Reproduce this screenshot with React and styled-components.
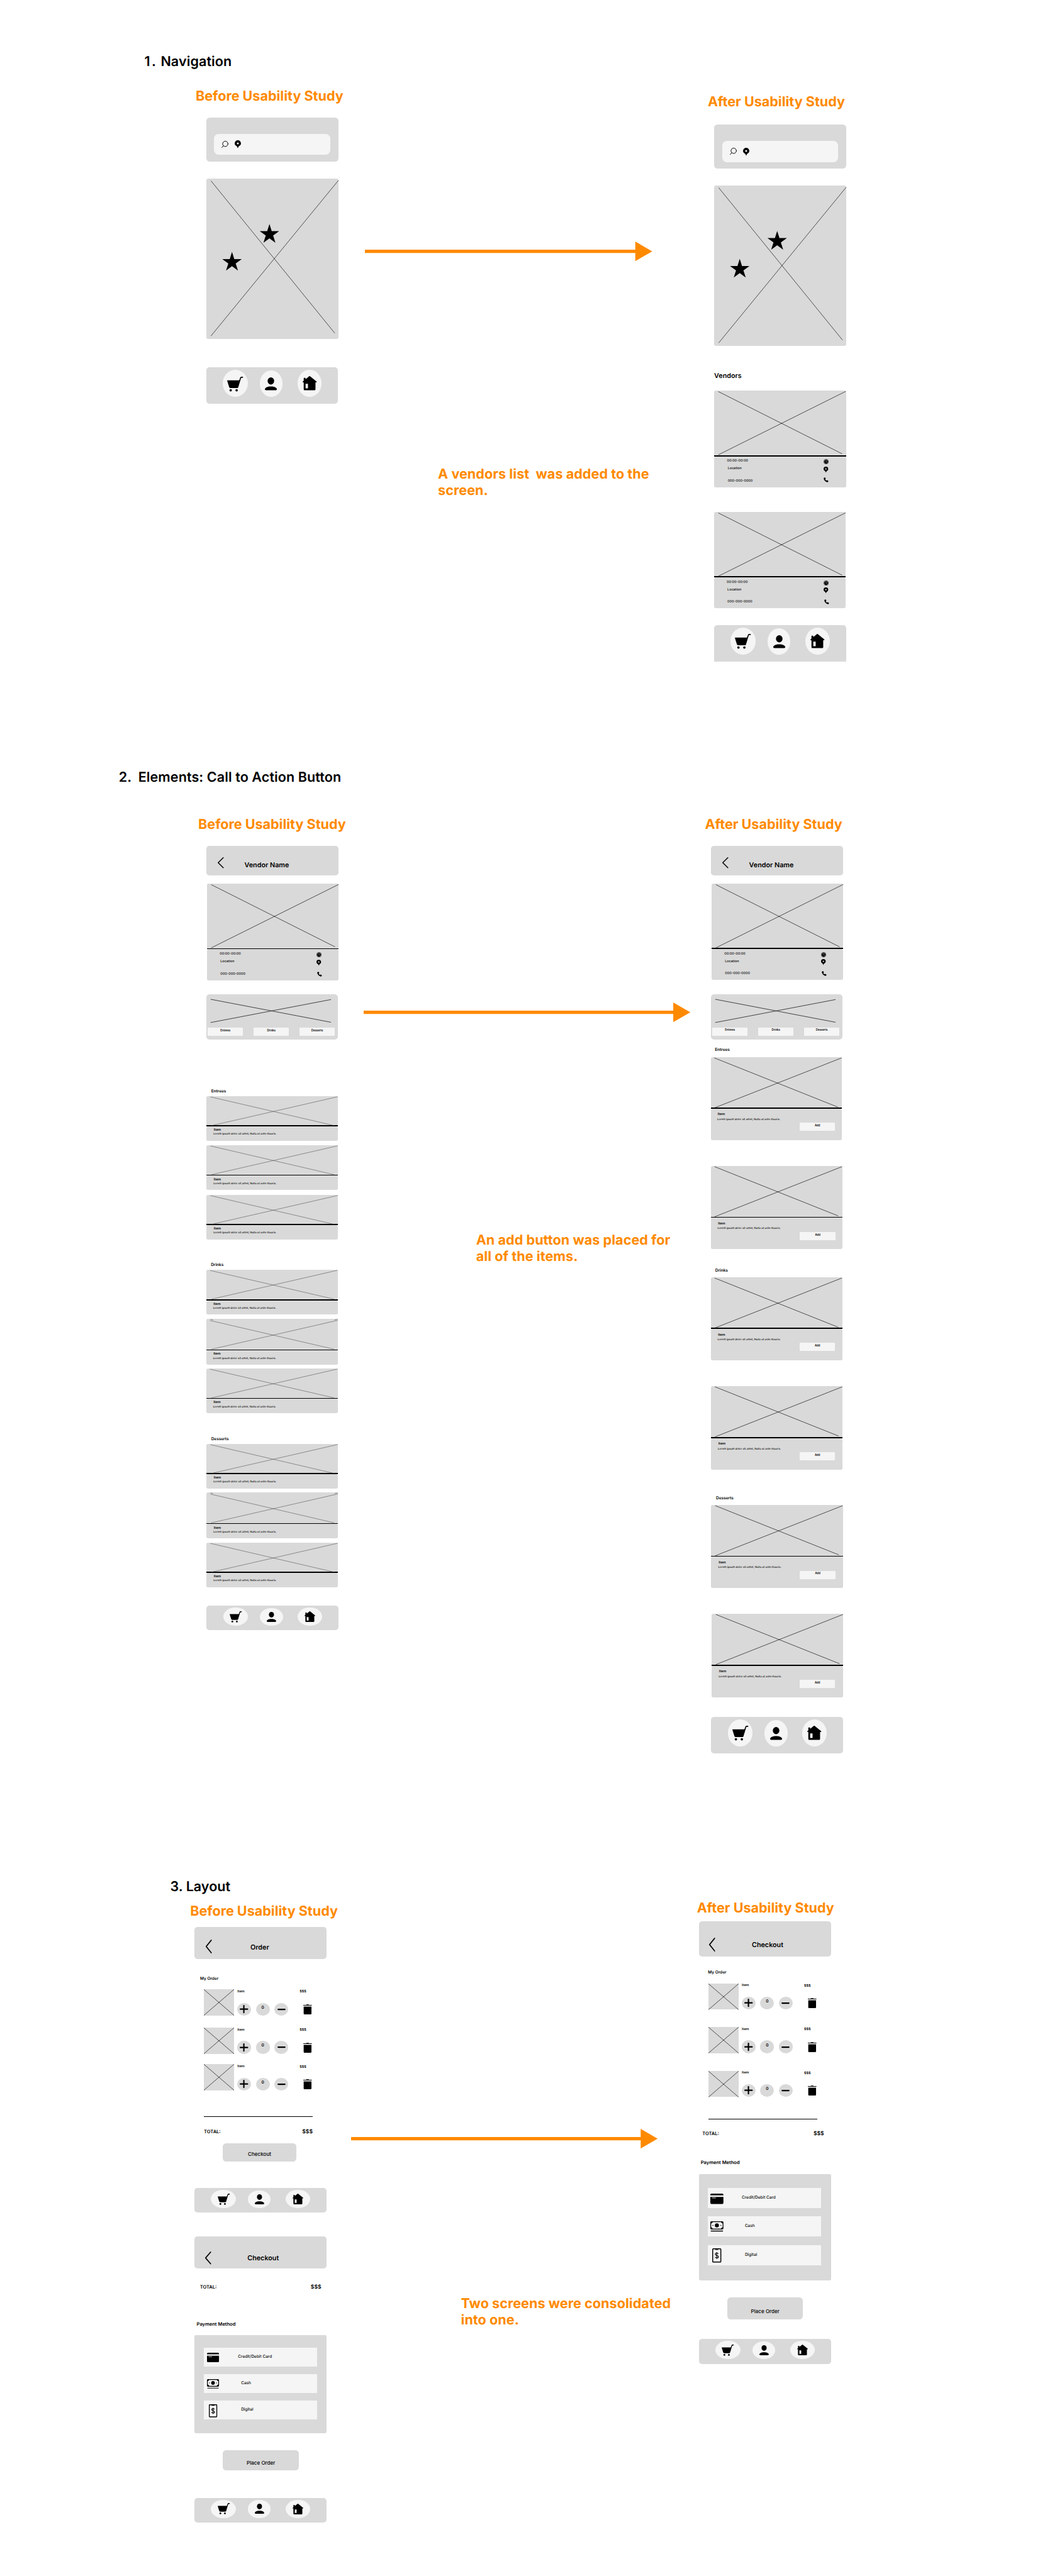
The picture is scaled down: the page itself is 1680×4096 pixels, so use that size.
import React from "react";
import styled, { createGlobalStyle } from "styled-components";

/* All measures are in board units; u() turns them into pixels. */
const SCALE = 0.539;
const u = (n) => `${+(n * SCALE).toFixed(3)}px`;

const GRAY = "#d9d9d9";
const LIGHT = "#f5f5f5";
const ORANGE = "#ff8a00";

const GlobalStyle = createGlobalStyle`
  * { box-sizing: border-box; }
  body {
    margin: 0;
    background: #fff;
    color: #000;
    font-family: Inter, "Liberation Sans", sans-serif;
    text-rendering: geometricPrecision;
  }
`;

const Board = styled.main`
  width: ${u(3117)};
  height: ${u(7598)};
  overflow: hidden;
  background: #fff;
`;

const Section = styled.section`
  height: ${(p) => u(p.$height)};
  padding-top: ${(p) => u(p.$top)};
`;

const Heading = styled.h2`
  margin: ${u(1.5)} 0 ${u(-1.5)} ${(p) => u(p.$left)};
  font-size: ${u(40)};
  line-height: ${u(48.4)};
  font-weight: 600;
  letter-spacing: ${(p) => u(p.$track || 0)};
  white-space: pre;
`;

const Numeral = styled.span`
  letter-spacing: ${u(4)};
`;

const Lanes = styled.div`
  display: flex;
  align-items: flex-start;
  padding-left: ${(p) => u(p.$left)};
`;

const Screen = styled.div`
  flex: none;
  display: flex;
  flex-direction: column;
  align-items: flex-start;
  width: ${u(390)};
`;

const Middle = styled.div`
  flex: none;
  width: ${(p) => u(p.$width)};
  display: flex;
  flex-direction: column;
  align-items: flex-start;
`;

const Caption = styled.h3`
  margin: ${(p) => u(p.$gap + 1.5)} 0 ${u(-1.5)} ${(p) => u(p.$left)};
  font-size: ${u(40)};
  line-height: ${u(48.4)};
  font-weight: 700;
  letter-spacing: ${(p) => u(p.$track || 0)};
  color: ${ORANGE};
  white-space: pre;
`;

const ArrowSvg = styled.svg`
  display: block;
  width: ${(p) => u(p.$width)};
  height: ${u(58)};
  margin: ${(p) => u(p.$gap)} 0 0 ${(p) => u(p.$left)};
  fill: ${ORANGE};
`;

const Label = styled.div`
  margin: ${(p) => u((p.$gap || 0) + 1.2)} 0 ${u(-1.2)} ${(p) => u(p.$left || 0)};
  font-size: ${(p) => u(p.$size)};
  line-height: ${(p) => u(p.$size * 1.21)};
  font-weight: ${(p) => p.$weight || 600};
  white-space: nowrap;
`;

const Drawing = styled.svg`
  display: block;
  width: 100%;
  height: 100%;
  overflow: visible;
  stroke: ${(p) => p.$color || "#000"};
  stroke-width: ${(p) => p.$stroke || 1.2};
`;

/* search bar */
const SearchPanel = styled.div`
  width: ${u(390)};
  height: ${u(129.4)};
  margin-top: ${(p) => u(p.$gap)};
  padding: ${u(48)} 0 0 ${u(23)};
  border-radius: ${u(10)};
  background: ${GRAY};
`;

const SearchField = styled.div`
  display: flex;
  align-items: center;
  gap: ${u(18.5)};
  width: ${u(343)};
  height: ${u(62)};
  padding-left: ${u(23)};
  border-radius: ${u(14)};
  background: ${LIGHT};
`;

const MapPanel = styled.div`
  width: ${u(390)};
  height: ${u(474)};
  margin-top: ${u(50)};
  border-radius: ${u(6)};
  background: ${GRAY};
`;

/* tab bar */
const TabBar = styled.nav`
  display: flex;
  align-items: flex-end;
  width: ${u(389)};
  height: ${(p) => u(p.$tall ? 107 : 73)};
  margin-top: ${(p) => u(p.$gap)};
  padding: 0 0 ${(p) => u(p.$tall ? 20.2 : 13.6)} ${u(48.8)};
  gap: ${u(35.5)};
  border-radius: ${(p) => (p.$flat ? `${u(9)} ${u(9)} 0 0` : u(9))};
  background: ${GRAY};
`;

const Tab = styled.div`
  display: flex;
  align-items: center;
  justify-content: center;
  width: ${(p) => u(p.$w)};
  height: ${(p) => u(p.$h)};
  padding-top: ${(p) => u(p.$drop || 0)};
  margin-left: ${(p) => u(p.$shift || 0)};
  border-radius: 50%;
  background: ${LIGHT};
`;

const Glyph = styled.svg`
  display: block;
  flex: none;
  width: ${(p) => u(p.$w)};
  height: ${(p) => u(p.$h)};
  margin-top: ${(p) => u(p.$gap || 0)};
  margin-left: ${(p) => u(p.$left || 0)};
  overflow: visible;
`;

/* cards */
const Card = styled.article`
  width: ${(p) => u(p.$width || 388)};
  margin: ${(p) => u(p.$gap)} 0 0 ${(p) => u(p.$left || 0)};
`;

const Picture = styled.div`
  height: ${(p) => u(p.$height)};
  border-radius: ${u(5)} ${u(5)} 0 0;
  background: ${GRAY};
`;

const Divider = styled.div`
  height: ${u(3)};
  background: #000;
`;

const InfoPanel = styled.div`
  display: flex;
  height: ${u(91.5)};
  padding-left: ${(p) => u(p.$inset)};
  border-radius: ${u(5)};
  background: ${GRAY};
`;

const InfoTexts = styled.div`
  width: ${u(285)};
  padding-top: ${u(7.5)};
`;

const InfoIcons = styled.div`
  padding-top: ${u(8.9)};
`;

const ItemPanel = styled.div`
  height: ${(p) => u(p.$height)};
  padding-top: ${(p) => u(p.$top)};
  padding-left: ${(p) => u(p.$inset)};
  border-radius: ${u(5)};
  background: ${GRAY};
`;

const Chip = styled.button`
  display: flex;
  align-items: flex-start;
  justify-content: center;
  width: ${u(105)};
  height: ${u(24.5)};
  margin: ${(p) => u(p.$gap || 0)} 0 0 ${(p) => u(p.$left || 0)};
  padding: ${u(3.6)} 0 0;
  border: 0;
  border-radius: ${u(2)};
  background: ${LIGHT};
  color: #000;
  font: 600 ${u(8)}/${u(9.7)} Inter, "Liberation Sans", sans-serif;
`;

const TitleBar = styled.header`
  display: flex;
  align-items: flex-start;
  width: ${u(389.5)};
  height: ${(p) => u(p.$height)};
  margin-top: ${(p) => u(p.$gap)};
  padding-left: ${(p) => u(p.$inset)};
  border-radius: ${u(9)};
  background: ${GRAY};
`;

const CategoryPanel = styled.div`
  width: ${u(387)};
  height: ${u(133)};
  margin-top: ${(p) => u(p.$gap)};
  border-radius: ${u(9)};
  background: ${GRAY};
`;

const CategoryArt = styled.div`
  height: ${u(97.5)};
`;

const ChipRow = styled.div`
  display: flex;
  gap: ${u(30.4)};
  padding-left: ${u(3)};
`;

/* order screen */
const OrderList = styled.div`
  margin: ${(p) => u(p.$gap)} 0 0 ${u(27.4)};
`;

const OrderRow = styled.div`
  display: flex;
  height: ${u(77.7)};
  margin-top: ${(p) => u(p.$gap)};
`;

const Thumb = styled.div`
  width: ${u(89)};
  background: ${GRAY};
`;

const OrderDetails = styled.div`
  width: ${u(193.7)};
  padding-left: ${u(10)};
  display: flex;
  flex-direction: column;
  justify-content: space-between;
`;

const Stepper = styled.div`
  display: flex;
  gap: ${u(14)};
`;

const Step = styled.div`
  display: flex;
  align-items: center;
  justify-content: center;
  width: ${u(40.6)};
  height: ${u(38.2)};
  padding-bottom: ${(p) => u(p.$lift || 0)};
  border-radius: 50%;
  background: ${GRAY};
  font-size: ${u(12)};
  line-height: ${u(14.5)};
  font-weight: 600;
`;

const Rule = styled.div`
  width: ${u(321)};
  height: ${u(2)};
  margin: ${(p) => u(p.$gap)} 0 0 ${u(27.4)};
  background: #000;
`;

const Totals = styled.div`
  display: flex;
  align-items: baseline;
  justify-content: space-between;
  width: ${(p) => u(p.$width)};
  height: ${u(19.4)};
  margin: ${(p) => u(p.$gap)} 0 0 ${(p) => u(p.$left)};
`;

const BigButton = styled.button`
  display: flex;
  justify-content: center;
  align-items: flex-start;
  width: ${(p) => u(p.$width)};
  height: ${(p) => u(p.$height)};
  margin: ${(p) => u(p.$gap)} 0 0 ${u(84)};
  padding: ${(p) => u(p.$drop)} 0 0;
  border: 0;
  border-radius: ${u(10)};
  background: ${GRAY};
  color: #000;
  font: 500 ${u(15)}/${u(18.2)} Inter, "Liberation Sans", sans-serif;
`;

const PaymentPanel = styled.div`
  width: ${u(390)};
  height: ${(p) => u(p.$large ? 312.4 : 289)};
  margin-top: ${(p) => u(p.$gap)};
  padding: ${(p) => u(p.$large ? 40.7 : 38)} 0 0 ${(p) => u(p.$large ? 26 : 27)};
  border-radius: ${u(4)};
  background: ${GRAY};
`;

const PaymentOption = styled.div`
  display: flex;
  align-items: center;
  width: ${u(334)};
  height: ${(p) => u(p.$large ? 59 : 55.6)};
  margin-bottom: ${(p) => u(p.$space)};
  background: ${LIGHT};
`;

const OptionIcon = styled.div`
  display: flex;
  justify-content: center;
  width: ${(p) => u(p.$large ? 55 : 56)};
  padding-top: ${u(2)};
`;

const OptionText = styled.div`
  margin-left: ${(p) => u(p.$left)};
  font-size: ${u(12)};
  line-height: ${u(14.5)};
  font-weight: 500;
  white-space: nowrap;
`;

/* ---------- drawings ---------- */

const SearchIcon = () => (
  <Glyph $w={20} $h={20.4} viewBox="0 0 20 20.4" fill="none" stroke="#000" strokeWidth="1.8" strokeLinecap="round">
    <circle cx="11.4" cy="8.8" r="7.9" />
    <path d="M6 14.5L.8 19.7" />
  </Glyph>
);

const PinIcon = ({ w, h, gap }) => (
  <Glyph $w={w} $h={h} $gap={gap} viewBox="0 0 18.5 23.2">
    <path
      fillRule="evenodd"
      d="M9.25 0a9.25 9.25 0 0 1 9.25 9.25c0 3-1.6 5.4-4 7.2l-3.2 2.3-1.3 3.7a.8.8 0 0 1-1.5 0l-1.3-3.7L4 16.45C1.6 14.65 0 12.25 0 9.25A9.25 9.25 0 0 1 9.25 0zM9.25 6.4a2.85 2.85 0 1 0 0 5.7a2.85 2.85 0 0 0 0-5.7z"
    />
  </Glyph>
);

const ClockIcon = () => (
  <Glyph $w={15} $h={15} viewBox="0 0 15 15">
    <circle cx="7.5" cy="7.5" r="6.8" fill="none" stroke="#000" strokeWidth="1.3" />
    <circle cx="7.5" cy="7.5" r="5.3" />
    <path d="M7.5 4.4V7.8L9.7 9.6" fill="none" stroke={GRAY} strokeWidth="1" />
  </Glyph>
);

const PhoneIcon = ({ gap, left }) => (
  <Glyph $w={14.2} $h={14.2} $gap={gap} $left={left} viewBox="3 3 18 18">
    <path d="M7.4 3.6c1-.5 2 0 2.4 1l1 2.4c.3.9.1 1.8-.6 2.4l-1.3 1.1c.9 1.9 2.3 3.5 4.1 4.6l1.5-.9c.8-.5 1.7-.5 2.5 0l3 1.9c1 .7 1.2 1.9.5 2.8-1.3 1.7-3.3 2.5-5.4 1.9C9 19 4.3 13.3 3.4 7.4 3.1 5.5 5 4.3 7.4 3.6z" />
  </Glyph>
);

const CartIcon = ({ s }) => (
  <Glyph $w={47 * s} $h={43.5 * s} viewBox="0 0 47 43.5">
    <path d="M1.2 10.7H35.5L37.8 4.5C38.8 1.5 40 .2 42.5 .2H45.5a1.5 1.5 0 0 1 0 3.2H43c-1.3 0-1.8.6-2.4 2.1L33 30.5C32.3 32.6 31.2 33.4 29.5 33.4H9.5C7.8 33.4 6.6 32.5 6 30.7L.2 12.2C0 11.4.3 10.7 1.2 10.7z" />
    <circle cx="10.5" cy="40" r="3.5" />
    <circle cx="28" cy="40" r="3.5" />
  </Glyph>
);

const PersonIcon = ({ s }) => (
  <Glyph $w={35.4 * s} $h={38 * s} viewBox="0 0 35.4 38">
    <ellipse cx="17.7" cy="10.6" rx="9.7" ry="10.6" />
    <path d="M17.7 26.8c10.2 0 17.7 3.6 17.7 8 0 2-1 3.2-3.4 3.2H3.4C1 38 0 36.8 0 34.8c0-4.4 7.5-8 17.7-8z" />
  </Glyph>
);

const HouseIcon = ({ s }) => (
  <Glyph $w={41.5 * s} $h={41.8 * s} viewBox="0 0 41.5 41.8">
    <path
      fillRule="evenodd"
      d="M19.3.6a2 2 0 0 1 2.6 0L40.8 15.8c1.3 1.1.7 2.8-.8 2.7H37.9V39a2.8 2.8 0 0 1-2.8 2.8H6A2.8 2.8 0 0 1 3.2 39V18.5H1.4c-1.5 0-1.9-1.7-.6-2.7L3.2 13.8V6.5A1.5 1.5 0 0 1 4.7 5H7.2A1.5 1.5 0 0 1 8.7 6.5V9.2zM8.7 22.6V36.2H15.7V22.6z"
    />
  </Glyph>
);

const TrashIcon = () => (
  <Glyph $w={25.4} $h={29.6} $gap={30.7} $left={10.8} viewBox="0 0 25.4 29.6">
    <path d="M8.6 1.7L9.3.3H16.1L16.8 1.7H24.6a.9.9 0 0 1 0 2H.8a.9.9 0 0 1 0-2zM1.2 6.7H24.2V27.2a2.4 2.4 0 0 1-2.4 2.4H3.6A2.4 2.4 0 0 1 1.2 27.2z" />
  </Glyph>
);

const BackIcon = ({ gap, h }) => (
  <Glyph $w={17.6} $h={h} $gap={gap} viewBox="0 0 17.6 32" preserveAspectRatio="none" fill="none" stroke="#000" strokeWidth="2.8" strokeLinecap="round" strokeLinejoin="round">
    <path d="M16.4 1.4L1.4 16L16.4 30.6" />
  </Glyph>
);

const CardIcon = ({ s }) => (
  <Glyph $w={35.4 * s} $h={28 * s} viewBox="0 0 35.4 28">
    <path d="M3 0H32.4a3 3 0 0 1 3 3V4.6H0V3A3 3 0 0 1 3 0zM0 8.8H35.4V25a3 3 0 0 1-3 3H3a3 3 0 0 1-3-3z" />
    <path d="M4.4 11.7H15" stroke={LIGHT} strokeWidth="1.4" />
  </Glyph>
);

const CashIcon = ({ s }) => (
  <Glyph $w={35.4 * s} $h={27.7 * s} viewBox="0 0 35.4 27.7">
    <rect x="1.1" y="1.1" width="33.2" height="20" rx="2.4" fill="none" stroke="#000" strokeWidth="2.2" />
    <path d="M1 1h5.5c0 3-2.4 5-5.5 5zM34.4 1h-5.5c0 3 2.4 5 5.5 5zM1 21h5.5c0-3-2.4-5-5.5-5zM34.4 21h-5.5c0-3 2.4-5 5.5-5z" />
    <circle cx="17.7" cy="11.1" r="5.5" />
    <circle cx="7" cy="11.1" r="1.3" />
    <circle cx="28.4" cy="11.1" r="1.3" />
    <path d="M2 26.4H33.4" stroke="#000" strokeWidth="2.2" strokeLinecap="round" />
  </Glyph>
);

const DigitalIcon = ({ s }) => (
  <Glyph $w={24.6 * s} $h={38.4 * s} viewBox="0 0 24.6 38.4">
    <rect x="1.3" y="1.3" width="22" height="35.8" rx="1.4" fill="none" stroke="#000" strokeWidth="2.5" />
    <path d="M7.5 2H17L16 4.2H8.5z" />
    <path d="M16.6 15.2C16 13.5 14.5 12.8 12.4 12.8c-2.5 0-4.2 1.2-4.2 3.2 0 4.6 8.8 1.9 8.8 6.6 0 2.2-1.9 3.4-4.6 3.4-2.4 0-4.2-.9-4.7-2.9M12.4 10.3V28.5" fill="none" stroke="#000" strokeWidth="2" />
  </Glyph>
);

const Arrow = ({ width, gap, left }) => (
  <ArrowSvg $width={width} $gap={gap} $left={left} viewBox={`0 0 ${width} 58`} preserveAspectRatio="none">
    <path d={`M0 24.2H${width - 50}V0L${width} 29L${width - 50} 58V34H0z`} />
  </ArrowSvg>
);

const Cross = ({ w, h, a, b, stroke, color, children }) => (
  <Drawing $stroke={stroke} $color={color} viewBox={`0 0 ${w} ${h}`} preserveAspectRatio="none">
    <line x1={a[0]} y1={a[1]} x2={a[2]} y2={a[3]} />
    <line x1={b[0]} y1={b[1]} x2={b[2]} y2={b[3]} />
    {children}
  </Drawing>
);

/* ---------- parts ---------- */

const STAR = "M28.6 0L35.3 21.1H57.2L39.5 34.1L46.3 55.2L28.6 42.2L10.9 55.2L17.7 34.1L0 21.1H21.9z";

const Search = ({ gap }) => (
  <SearchPanel $gap={gap}>
    <SearchField>
      <SearchIcon />
      <PinIcon w={18.5} h={23.2} />
    </SearchField>
  </SearchPanel>
);

const MapView = () => (
  <MapPanel>
    <Cross w={390} h={474} a={[13.4, 6.3, 378.7, 456]} b={[389.6, 5, 13.4, 464.4]}>
      <path d={STAR} fill="#000" stroke="none" transform="translate(157.4 134)" />
      <path d={STAR} fill="#000" stroke="none" transform="translate(47 216.2)" />
    </Cross>
  </MapPanel>
);

const Tabs = ({ gap, tall, flat }) => {
  const s = tall ? 1 : 0.76;
  return (
    <TabBar $gap={gap} $tall={tall} $flat={flat}>
      <Tab $w={73.3} $h={tall ? 79.3 : 54} $drop={tall ? 3 : 1}>
        <CartIcon s={s} />
      </Tab>
      <Tab $w={67.5} $h={tall ? 77 : 52.7}>
        <PersonIcon s={tall ? 1 : 0.78} />
      </Tab>
      <Tab $w={72} $h={tall ? 79.3 : 54} $shift={8.3}>
        <HouseIcon s={s} />
      </Tab>
    </TabBar>
  );
};

const VendorCard = ({ gap, left, width = 388, inset = 39, phoneGap = 20.5, phoneLeft = 2.5 }) => (
  <Card $gap={gap} $left={left} $width={width}>
    <Picture $height={190.5}>
      <Cross w={width} h={190.5} a={[12.5, 3, 377.5, 186.6]} b={[388.2, 2.4, 12.5, 189.6]} />
    </Picture>
    <Divider />
    <InfoPanel $inset={inset - 1}>
      <InfoTexts>
        <Label $size={10} $weight={500}>00:00-00:00</Label>
        <Label $size={10} $weight={500} $gap={10.2} $left={2}>Location</Label>
        <Label $size={10} $weight={500} $gap={24.3} $left={2}>000-000-0000</Label>
      </InfoTexts>
      <InfoIcons>
        <ClockIcon />
        <PinIcon w={13.7} h={17.2} gap={6} />
        <PhoneIcon gap={phoneGap - 2} left={phoneLeft} />
      </InfoIcons>
    </InfoPanel>
  </Card>
);

const Lorem = ({ gap, left }) => (
  <Label $size={8} $weight={500} $gap={gap} $left={left}>
    Lorem ipsum dolor sit amet, Nulla ut ante mauris.
  </Label>
);

const MenuItem = ({ gap, shift = 0, doubled }) => {
  const h = doubled ? 89.8 : 86.8;
  const t = doubled ? 5 : 2;
  return (
    <Card $gap={gap} $width={388 + shift}>
      <Picture $height={h}>
        <Cross w={388 + shift} h={h} a={[12 + shift, t, 377, h]} b={[388 + shift, t - 0.5, 15, h]} stroke={1} color="#444">
          {doubled && <path d="M12 1.5L20 3.2M388 1L378 3.2" />}
        </Cross>
      </Picture>
      <Divider />
      <ItemPanel $height={42} $top={4.6} $inset={21.3 + shift}>
        <Label $size={10}>Item</Label>
        <Lorem gap={1.3} left={-1} />
      </ItemPanel>
    </Card>
  );
};

const MenuItemWithAdd = ({ gap, left = 0, width, shift = 0, button = 0 }) => (
  <Card $gap={gap} $left={left} $width={width}>
    <Picture $height={149.8}>
      <Cross w={width} h={149.8} a={[9.7 + shift, 2, 374.3 + shift, 147.3]} b={[width - 0.5, 2, 9.7 + shift, 149.8]} />
    </Picture>
    <Divider />
    <ItemPanel $height={92.5} $top={11} $inset={19.3 + shift}>
      <Label $size={10}>Item</Label>
      <Lorem gap={3.3} left={-1.3} />
      <Chip $gap={5.2} $left={241.5 + button - shift}>Add</Chip>
    </ItemPanel>
  </Card>
);

const VendorHeader = ({ gap }) => (
  <TitleBar $gap={gap} $height={88} $inset={33.3}>
    <BackIcon gap={34.6} h={32.5} />
    <Label $size={20} $gap={44} $left={61}>Vendor Name</Label>
  </TitleBar>
);

const Categories = ({ gap }) => (
  <CategoryPanel $gap={gap}>
    <CategoryArt>
      <Cross w={387} h={97.5} a={[12.6, 14.7, 367.4, 82.5]} b={[367.4, 15.5, 12.6, 83.3]} stroke={1.3} />
    </CategoryArt>
    <ChipRow>
      <Chip>Entrees</Chip>
      <Chip>Drinks</Chip>
      <Chip>Desserts</Chip>
    </ChipRow>
  </CategoryPanel>
);

const OrderItem = ({ gap }) => (
  <OrderRow $gap={gap}>
    <Thumb>
      <Cross w={89} h={77.7} a={[0, 0.5, 89, 77.2]} b={[89, 0.5, 0, 77.2]} />
    </Thumb>
    <OrderDetails>
      <Label $size={10}>Item</Label>
      <Stepper>
        <Step $lift={1.4}>
          <Glyph $w={25} $h={24.6} viewBox="0 0 25 24.6" stroke="#000" strokeWidth="4" strokeLinecap="round">
            <path d="M2 12.3H23M12.2 2V22.6" />
          </Glyph>
        </Step>
        <Step $lift={8.5}>0</Step>
        <Step>
          <Glyph $w={24} $h={4} viewBox="0 0 24 4" stroke="#000" strokeWidth="4" strokeLinecap="round">
            <path d="M2 2H22" />
          </Glyph>
        </Step>
      </Stepper>
    </OrderDetails>
    <div>
      <Label $size={10} $gap={1}>$$$</Label>
      <TrashIcon />
    </div>
  </OrderRow>
);

const Total = ({ gap, left, width }) => (
  <Totals $gap={gap} $left={left} $width={width}>
    <Label $size={14}>TOTAL:</Label>
    <Label $size={16}>$$$</Label>
  </Totals>
);

const Payment = ({ gap, large }) => {
  const s = large ? 1.09 : 1;
  return (
    <PaymentPanel $gap={gap} $large={large}>
      <PaymentOption $large={large} $space={large ? 24.3 : 21.5}>
        <OptionIcon $large={large}><CardIcon s={s} /></OptionIcon>
        <OptionText $left={45.5}>Credit/Debit Card</OptionText>
      </PaymentOption>
      <PaymentOption $large={large} $space={large ? 26 : 23.2}>
        <OptionIcon $large={large}><CashIcon s={s} /></OptionIcon>
        <OptionText $left={54.5}>Cash</OptionText>
      </PaymentOption>
      <PaymentOption $large={large} $space={0}>
        <OptionIcon $large={large}><DigitalIcon s={s} /></OptionIcon>
        <OptionText $left={54.5}>Digital</OptionText>
      </PaymentOption>
    </PaymentPanel>
  );
};

/* ---------- board ---------- */

const Navigation = () => (
  <Section $height={2200} $top={156.25}>
    <Heading $left={426} $track={0.15}><Numeral>1.</Numeral>{" Navigation"}</Heading>
    <Lanes $left={608}>
      <Screen>
        <Caption $gap={54.5} $left={-31}>Before Usability Study</Caption>
        <Search gap={39.4} />
        <MapView />
        <Tabs gap={83.2} tall />
      </Screen>
      <Middle $width={1108}>
        <Arrow width={847.3} gap={508} left={78} />
        <Caption $gap={602.9} $left={293.5} $track={0.1}>{"A vendors list  was added to the\nscreen."}</Caption>
      </Middle>
      <Screen>
        <Caption $gap={70.3} $left={-19}>After Usability Study</Caption>
        <Search gap={44.6} />
        <MapView />
        <Label $size={20} $gap={73.9}>Vendors</Label>
        <VendorCard gap={33.4} width={389} phoneGap={17.4} phoneLeft={0} />
        <VendorCard gap={72} inset={38} />
        <Tabs gap={49.3} tall flat />
      </Screen>
    </Lanes>
  </Section>
);

const Elements = () => (
  <Section $height={3200} $top={68.25}>
    <Heading $left={350} $track={0.15}>2.  Elements: Call to Action Button</Heading>
    <Lanes $left={609}>
      <Screen>
        <Caption $gap={89.6} $left={-24.5}>Before Usability Study</Caption>
        <VendorHeader gap={40.3} />
        <VendorCard gap={24} left={1} />
        <Categories gap={42} />
        <Label $size={12} $gap={145.4} $left={13.8}>Entrees</Label>
        <MenuItem gap={6.4} />
        <MenuItem gap={13.6} />
        <MenuItem gap={14.2} />
        <Label $size={12} $gap={68.9} $left={12.8}>Drinks</Label>
        <MenuItem gap={6.5} shift={-1} />
        <MenuItem gap={13.1} shift={-1} doubled />
        <MenuItem gap={11.3} shift={-1} />
        <Label $size={12} $gap={69.2} $left={13.8}>Desserts</Label>
        <MenuItem gap={6.8} />
        <MenuItem gap={12.5} doubled />
        <MenuItem gap={12} />
        <Tabs gap={54.6} />
      </Screen>
      <Middle $width={1098}>
        <Arrow width={963} gap={640.3} left={74} />
        <Caption $gap={618} $left={405} $track={0.1}>{"An add button was placed for\nall of the items."}</Caption>
      </Middle>
      <Screen>
        <Caption $gap={89.1} $left={-18}>After Usability Study</Caption>
        <VendorHeader gap={40.3} />
        <VendorCard gap={23.5} left={1} />
        <Categories gap={42.3} />
        <Label $size={12} $gap={24.1} $left={11}>Entrees</Label>
        <MenuItemWithAdd gap={13.1} width={386} />
        <MenuItemWithAdd gap={76.7} width={387} shift={1} button={1} />
        <Label $size={12} $gap={55.7} $left={12}>Drinks</Label>
        <MenuItemWithAdd gap={12.3} width={387} shift={1} />
        <MenuItemWithAdd gap={76.9} width={388} shift={2} />
        <Label $size={12} $gap={76.8} $left={14.3}>Desserts</Label>
        <MenuItemWithAdd gap={13.4} width={389} shift={3} button={1} />
        <MenuItemWithAdd gap={76.7} left={1} width={388} shift={3} button={-1} />
        <Tabs gap={57.9} tall />
      </Screen>
    </Lanes>
  </Section>
);

const Layout = () => (
  <Section $height={2198} $top={140.25}>
    <Heading $left={502}>3. Layout</Heading>
    <Lanes $left={573.5}>
      <Screen>
        <Caption $gap={23.2} $left={-12.7}>Before Usability Study</Caption>
        <TitleBar $gap={23.7} $height={95} $inset={32.3}>
          <BackIcon gap={38} h={41} />
          <Label $size={20} $gap={48.5} $left={115}>Order</Label>
        </TitleBar>
        <Label $size={12} $gap={50.8} $left={16.5}>My Order</Label>
        <OrderList $gap={24.6}>
          <OrderItem gap={0} />
          <OrderItem gap={34.8} />
          <OrderItem gap={30.8} />
        </OrderList>
        <Rule $gap={75.5} />
        <Total gap={33.3} left={27.7} width={321} />
        <BigButton $gap={24.3} $width={216} $height={55.6} $drop={25.4}>Checkout</BigButton>
        <Tabs gap={77} />
        <TitleBar $gap={70.2} $height={94} $inset={31.5}>
          <BackIcon gap={44.3} h={38} />
          <Label $size={20} $gap={50.2} $left={107}>Checkout</Label>
        </TitleBar>
        <Total gap={45.5} left={16} width={358} />
        <Label $size={14} $gap={90.5} $left={6.5}>Payment Method</Label>
        <Payment gap={24.6} />
        <BigButton $gap={49.8} $width={224} $height={61} $drop={30.3}>Place Order</BigButton>
        <Tabs gap={80.2} />
      </Screen>
      <Middle $width={1097.5}>
        <Arrow width={904} gap={691.3} left={71.5} />
        <Caption $gap={433} $left={395.5} $track={0.1}>{"Two screens were consolidated\ninto one."}</Caption>
      </Middle>
      <Screen>
        <Caption $gap={14.2} $left={-6}>After Usability Study</Caption>
        <TitleBar $gap={17.5} $height={102.4} $inset={30}>
          <BackIcon gap={48} h={41} />
          <Label $size={20} $gap={54.8} $left={108.5}>Checkout</Label>
        </TitleBar>
        <Label $size={12} $gap={39.9} $left={26.8}>My Order</Label>
        <OrderList $gap={25.2}>
          <OrderItem gap={0} />
          <OrderItem gap={51.5} />
          <OrderItem gap={51} />
        </OrderList>
        <Rule $gap={63.3} />
        <Total gap={33.5} left={10} width={359} />
        <Label $size={14} $gap={64.8} $left={5.5}>Payment Method</Label>
        <Payment gap={28.3} large />
        <BigButton $gap={50.6} $width={223} $height={65.8} $drop={32.8}>Place Order</BigButton>
        <Tabs gap={57.5} />
      </Screen>
    </Lanes>
  </Section>
);

export default function App() {
  return (
    <>
      <GlobalStyle />
      <Board>
        <Navigation />
        <Elements />
        <Layout />
      </Board>
    </>
  );
}
